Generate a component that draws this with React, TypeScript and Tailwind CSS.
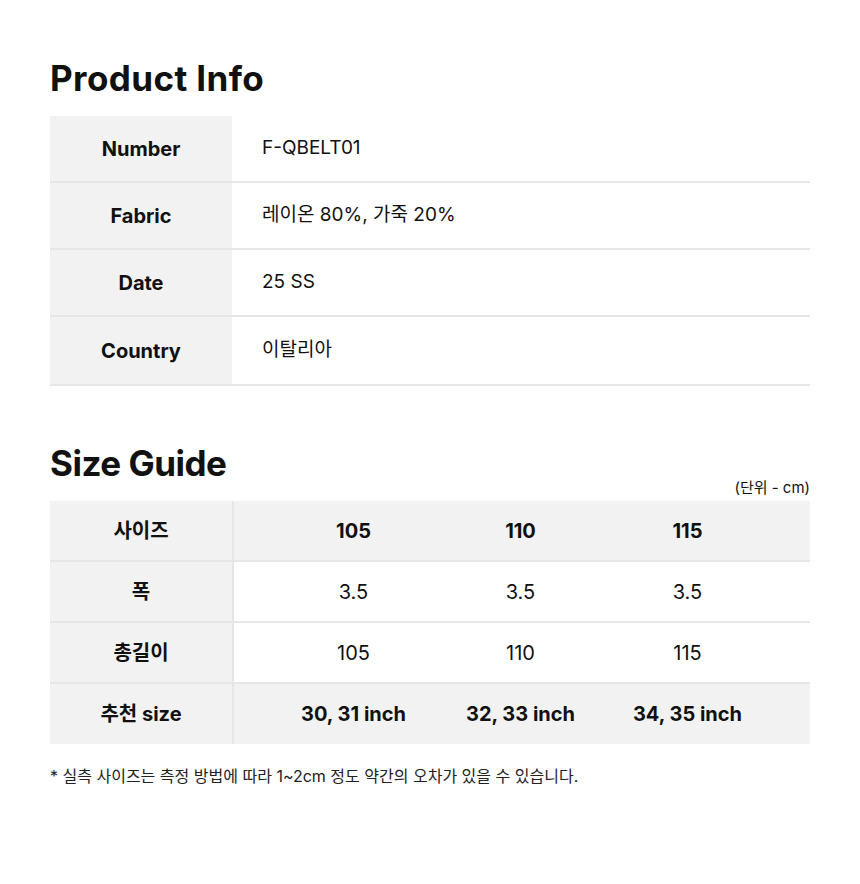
import React from "react";

const font = { fontFamily: 'Inter, "Noto Sans CJK KR", sans-serif' };

const info = [
  ["Number", "F-QBELT01"],
  ["Fabric", "레이온 80%, 가죽 20%"],
  ["Date", "25 SS"],
  ["Country", "이탈리아"],
];

const sizeRows: { label: string; vals: string[]; gray: boolean; bold: boolean }[] = [
  { label: "사이즈", vals: ["105", "110", "115"], gray: true, bold: true },
  { label: "폭", vals: ["3.5", "3.5", "3.5"], gray: false, bold: false },
  { label: "총길이", vals: ["105", "110", "115"], gray: false, bold: false },
  { label: "추천 size", vals: ["30, 31 inch", "32, 33 inch", "34, 35 inch"], gray: true, bold: true },
];

export default function App() {
  return (
    <div className="w-[860px] h-[884px] bg-white text-[#111]" style={font}>
      <div className="pl-[50px] pt-[56px] w-[810px]">
        <h1 className="text-[35px] font-bold leading-[44px] tracking-[0.4px]">Product Info</h1>
        <div className="mt-[16px] border-b-2 border-[#e6e6e6]">
          {info.map(([k, v], i) => (
            <div
              key={k}
              className={`flex h-[67px] ${i < info.length - 1 ? "border-b-2 border-[#e6e6e6]" : "h-[66px]"}`}
            >
              <div className="w-[182px] bg-[#f2f2f2] flex items-center justify-center text-[20px] font-bold">
                {k}
              </div>
              <div className="flex-1 flex items-center pl-[30px] text-[19px]">{v}</div>
            </div>
          ))}
        </div>

        <h2 className="mt-[55px] text-[35px] font-bold leading-[44px] tracking-[-0.5px]">Size Guide</h2>
        <div className="text-right text-[15px] leading-[18px] mt-[-6px]">(단위 - cm)</div>
        <div className="mt-[4px]">
          {sizeRows.map((r, i) => (
            <div
              key={r.label}
              className={`flex ${i < sizeRows.length - 1 ? "h-[61px] border-b-2 border-[#e6e6e6]" : "h-[60px]"} ${r.gray ? "bg-[#f2f2f2]" : "bg-white"}`}
            >
              <div className="w-[182px] bg-[#f2f2f2] flex items-center justify-center text-[20px] font-bold border-r-2 border-[#e6e6e6] box-content">
                {r.label}
              </div>
              <div className="flex-1 grid grid-cols-3 pl-[36px] pr-[39px]">
                {r.vals.map((v, j) => (
                  <div
                    key={j}
                    className={`flex items-center justify-center text-[20px] ${r.bold ? "font-bold" : ""}`}
                  >
                    {v}
                  </div>
                ))}
              </div>
            </div>
          ))}
        </div>
        <p className="mt-[22px] text-[16px] leading-[20px] text-[#222]">* 실측 사이즈는 측정 방법에 따라 1~2cm 정도 약간의 오차가 있을 수 있습니다.</p>
      </div>
    </div>
  );
}
